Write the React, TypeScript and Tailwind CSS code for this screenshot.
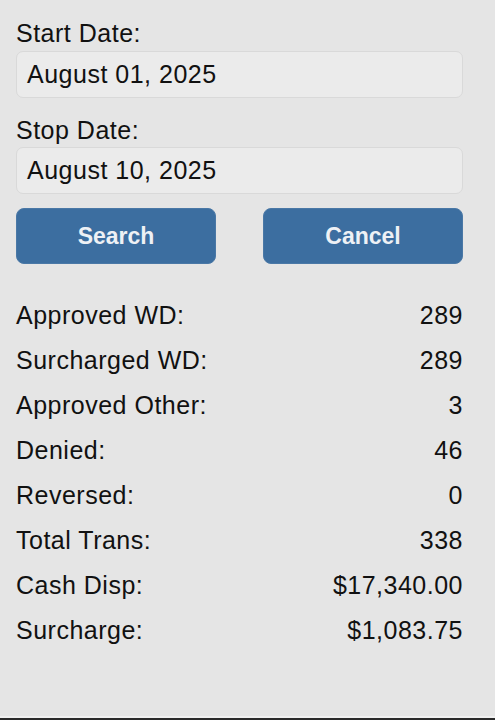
const rows: [string, string][] = [
  ['Approved WD:', '289'],
  ['Surcharged WD:', '289'],
  ['Approved Other:', '3'],
  ['Denied:', '46'],
  ['Reversed:', '0'],
  ['Total Trans:', '338'],
  ['Cash Disp:', '$17,340.00'],
  ['Surcharge:', '$1,083.75'],
];

export default function App() {
  return (
    <div
      className="min-h-[720px] h-[720px] flex flex-col bg-[#e5e5e5] text-[#111] text-[25px] tracking-[0.5px]"
      style={{ fontFamily: '"Liberation Sans", Arial, sans-serif' }}
    >
      <div className="flex-1 pl-4 pr-8 pt-[19px]">
        {/* Date fields */}
        <div className="leading-[28px]">Start Date:</div>
        <div className="mt-[4px] h-[47px] flex items-center px-[10px] pt-px rounded-[7px] border border-[#d9d9d9] bg-[#ebebeb]">
          August 01, 2025
        </div>
        <div className="mt-[18px] leading-[28px]">Stop Date:</div>
        <div className="mt-[3px] h-[47px] flex items-center px-[10px] pt-px rounded-[7px] border border-[#d9d9d9] bg-[#ebebeb]">
          August 10, 2025
        </div>

        {/* Buttons */}
        <div className="mt-[14px] grid grid-cols-2 gap-[47px]">
          <button className="h-[56px] rounded-[8px] bg-[#3c6ea0] border border-[#4a78a6] text-[#eef1f5] text-[23px] font-bold tracking-normal">
            Search
          </button>
          <button className="h-[56px] rounded-[8px] bg-[#3c6ea0] border border-[#4a78a6] text-[#eef1f5] text-[23px] font-bold tracking-normal">
            Cancel
          </button>
        </div>

        {/* Totals */}
        <div className="mt-[29px] flex flex-col">
          {rows.map(([label, value]) => (
            <div key={label} className="h-[45px] flex items-center justify-between">
              <span>{label}</span>
              <span>{value}</span>
            </div>
          ))}
        </div>
      </div>
      <div className="h-[2px] bg-[#f0f0f0]" />
      <div className="h-[2px] bg-[#2a2a2a]" />
    </div>
  );
}
